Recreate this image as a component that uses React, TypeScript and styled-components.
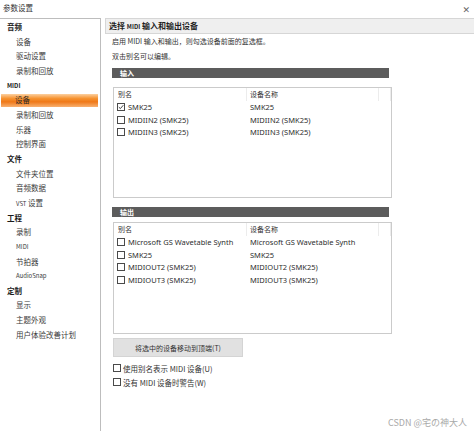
import React from "react";
import styled, { createGlobalStyle } from "styled-components";

const GlobalStyle = createGlobalStyle`
  html, body { margin: 0; padding: 0; background: #fff; }
  body {
    width: 474px;
    height: 431px;
    overflow: hidden;
    font-family: "Noto Sans CJK SC", "Noto Sans", sans-serif;
    color: #2e2e2e;
  }
  * { box-sizing: border-box; }
`;

const Window = styled.div`
  position: relative;
  width: 474px;
  height: 431px;
  display: flex;
  flex-direction: column;
`;

const TitleBar = styled.div`
  height: 18px;
  flex: none;
  display: flex;
  justify-content: space-between;
  padding: 0 4px 0 3px;
`;

const Title = styled.span`
  font-size: 7.5px;
  line-height: 16px;
  color: #333;
`;

const CloseButton = styled.span`
  font-family: "DejaVu Sans", sans-serif;
  font-size: 9px;
  line-height: 20px;
  color: #666;
`;

const Main = styled.div`
  flex: 1;
  display: flex;
  min-height: 0;
`;

const Sidebar = styled.nav`
  width: 101px;
  flex: none;
  border-top: 1px solid #bdbdbd;
  border-right: 1px solid #bdbdbd;
  padding-top: 1px;
`;

const NavItem = styled.div<{ $heading?: boolean; $latin?: boolean; $selected?: boolean }>`
  height: 14.66px;
  line-height: 14.66px;
  white-space: nowrap;
  padding-left: ${(p) => (p.$heading ? 6 : 15)}px;
  margin: 0 2px 0 1px;
  font-size: ${(p) => (p.$latin ? 6 : 7.5)}px;
  font-weight: ${(p) => (p.$heading ? 700 : 400)};
  color: ${(p) => (p.$heading ? "#1a1a1a" : "#3a3a3a")};
  ${(p) =>
    p.$selected
      ? `
    padding-left: 14px;
    background: linear-gradient(#fcd0a0, #f6922f 35%, #ef7818 60%, #f8b070);
    background-size: 100% 13px;
    background-position: center;
    background-repeat: no-repeat;
    color: #2a2a2a;
  `
      : ""}
`;

const Content = styled.section`
  flex: 1;
  padding-left: 4px;
  display: flex;
  flex-direction: column;
`;

const PageHeader = styled.div`
  height: 16px;
  border: 1px solid #d6d6d6;
  border-right: none;
  background: #efefef;
  font-size: 8px;
  font-weight: 700;
  line-height: 14px;
  padding-left: 3px;
  color: #1e1e1e;
`;

const Small = styled.span`
  font-size: 6px;
`;

const Body = styled.div`
  padding-left: 7px;
  width: 291px;
  display: flex;
  flex-direction: column;
`;

const Note = styled.div`
  font-size: 7px;
  line-height: 15px;
  color: #333;
  white-space: nowrap;
`;

const GroupBar = styled.div<{ $gap: number }>`
  margin-top: ${(p) => p.$gap}px;
  height: 10px;
  width: 277px;
  background: #5c5c5c;
  color: #fff;
  font-size: 7px;
  font-weight: 700;
  line-height: 10px;
  padding-left: 8px;
`;

const ListBox = styled.div<{ $gap: number; $height: number }>`
  margin-top: ${(p) => p.$gap}px;
  margin-left: 1px;
  width: 279px;
  height: ${(p) => p.$height}px;
  border: 1px solid #cbcbcb;
  background: #fff;
`;

const ListHeader = styled.div`
  display: grid;
  grid-template-columns: 133px 132px 1fr;
  height: 13px;
`;

const HeaderCell = styled.div<{ $pad: number }>`
  font-size: 7px;
  line-height: 13px;
  padding-left: ${(p) => p.$pad}px;
  border-right: 1px solid #ececec;
  color: #333;
`;

const ListRow = styled.div`
  display: grid;
  grid-template-columns: 133px 1fr;
  height: 12.6px;
  align-items: center;
`;

const Cell = styled.div<{ $pad: number }>`
  display: flex;
  align-items: center;
  gap: 3px;
  padding-left: ${(p) => p.$pad}px;
  font-family: "Noto Sans", "Noto Sans CJK SC", sans-serif;
  font-size: 7.5px;
  line-height: 12.6px;
  color: #2e2e2e;
  white-space: nowrap;
`;

const Box = styled.span`
  width: 8px;
  height: 8px;
  flex: none;
  border: 1px solid #4a4a4a;
  background: #fff;
  display: inline-flex;
  align-items: center;
  justify-content: center;
`;

const ActionButton = styled.button`
  margin-top: 4px;
  margin-left: 1px;
  width: 130px;
  height: 19px;
  border: 1px solid #d4d4d4;
  background: #e1e1e1;
  font-family: "Noto Sans CJK SC", sans-serif;
  font-size: 7px;
  color: #333;
  padding: 0;
`;

const Options = styled.div`
  margin-top: 4px;
  display: flex;
  flex-direction: column;
`;

const Option = styled.label`
  height: 14px;
  display: flex;
  align-items: center;
  gap: 2px;
  margin-left: 1px;
  font-size: 7.5px;
  color: #333;
  white-space: nowrap;
`;

const Watermark = styled.div`
  position: absolute;
  right: 7px;
  bottom: 1px;
  font-size: 9px;
  line-height: 14px;
  color: #a9a9a9;
`;

function CheckBox({ checked }: { checked?: boolean }) {
  return (
    <Box>
      {checked && (
        <svg width="6" height="6" viewBox="0 0 6 6">
          <path d="M0.8 3.1 L2.4 4.6 L5.3 1.2" fill="none" stroke="#333" strokeWidth="0.9" />
        </svg>
      )}
    </Box>
  );
}

type NavEntry = { label: React.ReactNode; heading?: boolean; latin?: boolean; selected?: boolean };

const nav: NavEntry[] = [
  { label: "音频", heading: true },
  { label: "设备" },
  { label: "驱动设置" },
  { label: "录制和回放" },
  { label: "MIDI", heading: true, latin: true },
  { label: "设备", selected: true },
  { label: "录制和回放" },
  { label: "乐器" },
  { label: "控制界面" },
  { label: "文件", heading: true },
  { label: "文件夹位置" },
  { label: "音频数据" },
  { label: <><Small>VST</Small> 设置</> },
  { label: "工程", heading: true },
  { label: "录制" },
  { label: "MIDI", latin: true },
  { label: "节拍器" },
  { label: "AudioSnap", latin: true },
  { label: "定制", heading: true },
  { label: "显示" },
  { label: "主题外观" },
  { label: "用户体验改善计划" },
];

type Device = { alias: string; name: string; checked?: boolean };

const inputs: Device[] = [
  { alias: "SMK25", name: "SMK25", checked: true },
  { alias: "MIDIIN2 (SMK25)", name: "MIDIIN2 (SMK25)" },
  { alias: "MIDIIN3 (SMK25)", name: "MIDIIN3 (SMK25)" },
];

const outputs: Device[] = [
  { alias: "Microsoft GS Wavetable Synth", name: "Microsoft GS Wavetable Synth" },
  { alias: "SMK25", name: "SMK25" },
  { alias: "MIDIOUT2 (SMK25)", name: "MIDIOUT2 (SMK25)" },
  { alias: "MIDIOUT3 (SMK25)", name: "MIDIOUT3 (SMK25)" },
];

function DeviceList({ devices, gap, height }: { devices: Device[]; gap: number; height: number }) {
  return (
    <ListBox $gap={gap} $height={height}>
      <ListHeader>
        <HeaderCell $pad={4}>别名</HeaderCell>
        <HeaderCell $pad={3}>设备名称</HeaderCell>
        <HeaderCell $pad={0} />
      </ListHeader>
      {devices.map((d) => (
        <ListRow key={d.alias}>
          <Cell $pad={3}>
            <CheckBox checked={d.checked} />
            {d.alias}
          </Cell>
          <Cell $pad={3}>{d.name}</Cell>
        </ListRow>
      ))}
    </ListBox>
  );
}

export default function App() {
  return (
    <>
      <GlobalStyle />
      <Window>
        <TitleBar>
          <Title>参数设置</Title>
          <CloseButton>✕</CloseButton>
        </TitleBar>
        <Main>
          <Sidebar>
            {nav.map((n, i) => (
              <NavItem key={i} $heading={n.heading} $latin={n.latin} $selected={n.selected}>
                {n.label}
              </NavItem>
            ))}
          </Sidebar>
          <Content>
            <PageHeader>
              选择 <Small>MIDI</Small> 输入和输出设备
            </PageHeader>
            <Body>
              <Note>启用 MIDI 输入和输出，则勾选设备前面的复选框。</Note>
              <Note>双击别名可以编辑。</Note>
              <GroupBar $gap={4}>输入</GroupBar>
              <DeviceList devices={inputs} gap={9} height={111} />
              <GroupBar $gap={9}>输出</GroupBar>
              <DeviceList devices={outputs} gap={5} height={112} />
              <ActionButton>将选中的设备移动到顶端(T)</ActionButton>
              <Options>
                <Option>
                  <CheckBox />
                  使用别名表示 MIDI 设备(U)
                </Option>
                <Option>
                  <CheckBox />
                  没有 MIDI 设备时警告(W)
                </Option>
              </Options>
            </Body>
          </Content>
        </Main>
        <Watermark>CSDN @宅の神大人</Watermark>
      </Window>
    </>
  );
}
